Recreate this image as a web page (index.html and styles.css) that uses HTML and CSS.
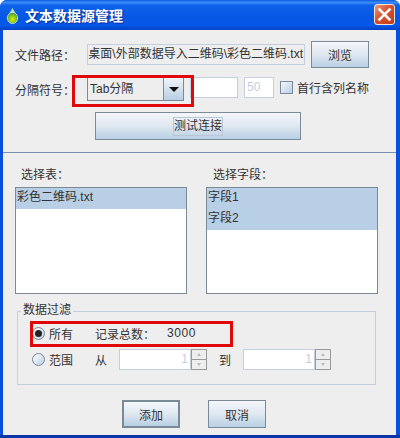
FILE: index.html
```html
<!DOCTYPE html>
<html lang="zh-CN">
<head>
  <meta charset="utf-8">
  <title>文本数据源管理</title>
  <link rel="stylesheet" href="styles.css">
</head>
<body>
  <div class="window">
    <!-- Title bar -->
    <div class="titlebar">
      <svg class="app-icon" width="16" height="20" viewBox="0 0 16 20">
        <defs>
          <radialGradient id="bulb" cx="50%" cy="62%" r="55%">
            <stop offset="0" stop-color="#d4ec00"/>
            <stop offset="0.65" stop-color="#86c41a"/>
            <stop offset="1" stop-color="#4a9a48"/>
          </radialGradient>
        </defs>
        <path d="M7.5 2 C8.5 3.5 9 5 10.5 7 L4.5 7 C6 5 6.5 3.5 7.5 2 Z" fill="#b7e0c0"/>
        <ellipse cx="7.5" cy="12" rx="5.2" ry="5.6" fill="url(#bulb)" stroke="#cfe6ec" stroke-width="0.8"/>
      </svg>
      <span class="title">文本数据源管理</span>
      <div class="close-btn">
        <svg width="15" height="15" viewBox="0 0 15 15">
          <path d="M2.5 2.5 L12.5 12.5 M12.5 2.5 L2.5 12.5" stroke="#fff" stroke-width="2.6" stroke-linecap="square"/>
        </svg>
      </div>
    </div>

    <div class="client">
      <!-- Source settings -->
      <div class="source">
        <div class="row row-path">
          <label class="field-label">文件路径<span class="colon">：</span></label>
          <div class="textfield path-field"><span>桌面\外部数据导入二维码\彩色二维码.txt</span></div>
          <button class="btn browse-btn">浏览</button>
        </div>
        <div class="row row-sep">
          <label class="field-label">分隔符号<span class="colon">：</span></label>
          <div class="combo">
            <span class="combo-text">Tab分隔</span>
            <span class="combo-arrow"><i></i></span>
          </div>
          <div class="textfield sep-field"></div>
          <div class="textfield num-field">50</div>
          <span class="checkbox"></span>
          <span class="check-label">首行含列名称</span>
        </div>
        <div class="row-test">
          <button class="btn test-btn"><span class="focus-box">测试连接</span></button>
        </div>
      </div>

      <!-- Table and field lists -->
      <div class="lists">
        <div class="list-col">
          <div class="list-title title-left">选择表<span class="colon">：</span></div>
          <ul class="listbox">
            <li class="selected">彩色二维码.txt</li>
          </ul>
        </div>
        <div class="list-col">
          <div class="list-title title-right">选择字段<span class="colon">：</span></div>
          <ul class="listbox">
            <li class="selected">字段1</li>
            <li class="selected">字段2</li>
          </ul>
        </div>
      </div>

      <!-- Filter -->
      <fieldset class="filter">
        <legend>数据过滤</legend>
        <div class="filter-row row-all">
          <span class="radio checked"></span>
          <span class="radio-label">所有</span>
          <span class="count-label">记录总数<span class="colon">：</span></span>
          <span class="count-value">3000</span>
        </div>
        <div class="filter-row row-range">
          <span class="radio"></span>
          <span class="radio-label">范围</span>
          <span class="from-label">从</span>
          <div class="spinner">
            <div class="spinner-value">1</div>
            <div class="spinner-btns"><i class="up"></i><i class="down"></i></div>
          </div>
          <span class="to-label">到</span>
          <div class="spinner">
            <div class="spinner-value">1</div>
            <div class="spinner-btns"><i class="up"></i><i class="down"></i></div>
          </div>
        </div>
      </fieldset>

      <div class="actions">
        <button class="btn action-btn default-btn">添加</button>
        <button class="btn action-btn">取消</button>
      </div>

      <!-- Red annotation boxes -->
      <div class="mark mark-combo"></div>
      <div class="mark mark-count"></div>
    </div>
  </div>
</body>
</html>
```
FILE: styles.css
```css
* {
  margin: 0;
  padding: 0;
  box-sizing: border-box;
}

body {
  width: 400px;
  height: 438px;
  overflow: hidden;
  background: #fff;
  font-family: "Liberation Sans", "Noto Sans CJK SC", sans-serif;
  font-size: 12px;
  color: #333;
}

.colon {
  font-family: "Noto Sans CJK TC", sans-serif;
}

.window {
  height: 438px;
  display: flex;
  flex-direction: column;
  background: #0a4fdc;
  border-radius: 7px 7px 0 0;
  border-bottom: 3px solid #0a34a8;
}

.titlebar {
  height: 30px;
  flex: none;
  display: flex;
  align-items: center;
  padding: 0 5px 0 5px;
  border-radius: 7px 7px 0 0;
  background: linear-gradient(#0a5ae0 0, #3b8cf6 8%, #0c62ea 18%, #0556e4 60%, #0658ea 85%, #0340c4 100%);
}

.app-icon {
  flex: none;
  margin-top: 1px;
}

.title {
  margin-left: 4px;
  font-size: 14px;
  font-weight: 700;
  color: #fff;
  text-shadow: 1px 1px 1px #0a2f9a;
}

.close-btn {
  margin-left: auto;
  margin-top: -1px;
  width: 21px;
  height: 21px;
  display: flex;
  align-items: center;
  justify-content: center;
  border: 1px solid #f4e4dc;
  border-radius: 3px;
  background: linear-gradient(135deg, #e89a80, #d9512c 45%, #c23a18);
}

.client {
  position: relative;
  flex: 1;
  margin: 0 4px 0 3px;
  background: #eeeeee;
}

.source {
  height: 123px;
  padding: 11px 0 0 12px;
  border-bottom: 1px solid #7a8fb0;
}

.row {
  display: flex;
  align-items: center;
}

.row-path {
  height: 27px;
}

.row-sep {
  height: 24px;
  margin-top: 9px;
}

.field-label {
  width: 72px;
  flex: none;
}

.textfield {
  height: 21px;
  flex: none;
  border: 1px solid #c3cfdf;
  background: #fff;
  line-height: 19px;
}

.path-field {
  width: 218px;
  display: flex;
  justify-content: flex-end;
  white-space: nowrap;
  padding-right: 1px;
  background: #eeeeee;
}

.path-field span {
  flex: none;
}

.btn {
  font-family: inherit;
  font-size: 12px;
  color: #333;
  border: 1px solid #7a8a99;
  background: linear-gradient(#f4f7fb, #dfe7f0 50%, #b8cfe5);
}

.browse-btn {
  width: 58px;
  height: 27px;
  margin-left: 6px;
}

.combo {
  width: 97px;
  height: 24px;
  flex: none;
  display: flex;
  border: 1px solid #7a8a99;
  background: #eeeeee;
}

.combo-text {
  flex: 1;
  line-height: 22px;
  padding-left: 2px;
}

.combo-arrow {
  width: 20px;
  display: flex;
  align-items: center;
  justify-content: center;
  border-left: 1px solid #7a8a99;
  background: linear-gradient(#f0f4f8, #b8cfe5);
}

.combo-arrow i {
  border-style: solid;
  border-width: 5px 5px 0;
  border-color: #111 transparent transparent;
}

.sep-field {
  width: 48px;
  margin-left: 6px;
  margin-top: -3px;
}

.num-field {
  width: 30px;
  margin-left: 6px;
  margin-top: -3px;
  padding-left: 2px;
  color: #c3cfdf;
}

.checkbox {
  width: 13px;
  height: 13px;
  flex: none;
  margin-left: 6px;
  margin-top: -3px;
  border: 1px solid #7a8a99;
  background: linear-gradient(135deg, #f4f7fb, #b8cfe5);
}

.check-label {
  margin-left: 4px;
  margin-top: -3px;
  white-space: nowrap;
}

.row-test {
  margin-top: 11px;
  padding-left: 80px;
}

.test-btn {
  width: 206px;
  height: 28px;
  display: flex;
  align-items: center;
  justify-content: center;
}

.focus-box {
  width: 50px;
  height: 19px;
  line-height: 17px;
  white-space: nowrap;
  border: 1px solid #b9c6d4;
}

.lists {
  display: flex;
  gap: 19px;
  padding: 11px 0 0 12px;
}

.list-col {
  width: 172px;
}

.list-title {
  height: 23px;
  line-height: 19px;
}

.title-left {
  padding-left: 6px;
}

.title-right {
  padding-left: 7px;
}

.listbox {
  height: 107px;
  list-style: none;
  border: 1px solid #7a8a99;
  background: #fff;
}

.listbox li {
  height: 21px;
  line-height: 19px;
  padding-left: 1px;
  white-space: nowrap;
}

.listbox li.selected {
  background: #b8cfe5;
}

.filter {
  width: 359px;
  height: 82px;
  margin: 9px 0 0 14px;
  border: 1px solid #c3cfdf;
}

.filter legend {
  margin-left: 3px;
  padding: 0 2px;
  height: 16px;
  line-height: 14px;
}

.filter-row {
  display: flex;
  align-items: center;
  padding-left: 14px;
}

.row-all {
  height: 22px;
  margin-top: 3px;
}

.row-range {
  height: 21px;
  margin-top: 5px;
}

.radio {
  width: 13px;
  height: 13px;
  flex: none;
  display: flex;
  align-items: center;
  justify-content: center;
  border: 1px solid #7a8a99;
  border-radius: 50%;
  background: linear-gradient(135deg, #fff, #b8cfe5);
}

.radio.checked::after {
  content: "";
  width: 7px;
  height: 7px;
  border-radius: 50%;
  background: #222;
}

.radio-label {
  margin-left: 4px;
  width: 24px;
}

.count-label {
  margin-left: 22px;
  width: 72px;
}

.count-value {
  letter-spacing: 0.6px;
}

.from-label {
  margin-left: 22px;
  width: 12px;
}

.to-label {
  margin-left: 12px;
  width: 12px;
}

.spinner {
  width: 88px;
  height: 21px;
  margin-left: 12px;
  flex: none;
  display: flex;
}

.spinner-value {
  flex: 1;
  border: 1px solid #c3cfdf;
  background: #fff;
  color: #c3cfdf;
  text-align: right;
  line-height: 19px;
  padding-right: 2px;
}

.spinner-btns {
  width: 16px;
  display: flex;
  flex-direction: column;
  border: 1px solid #9a9a9a;
  background: #eeeeee;
}

.spinner-btns i {
  flex: 1;
  display: flex;
  align-items: center;
  justify-content: center;
}

.spinner-btns .up {
  border-bottom: 1px solid #9a9a9a;
}

.spinner-btns i::after {
  content: "";
  border-style: solid;
  border-color: transparent;
}

.spinner-btns .up::after {
  border-width: 0 2px 3px;
  border-bottom-color: #bbb;
}

.spinner-btns .down::after {
  border-width: 3px 2px 0;
  border-top-color: #bbb;
}

.actions {
  display: flex;
  gap: 28px;
  margin-top: 15px;
  padding-left: 119px;
}

.action-btn {
  width: 58px;
  height: 28px;
}

.default-btn {
  border: 2px solid #7a8a99;
}

.mark {
  position: absolute;
  border: 3px solid #e00808;
}

.mark-combo {
  left: 69px;
  top: 45px;
  width: 122px;
  height: 32px;
}

.mark-count {
  left: 27px;
  top: 291px;
  width: 203px;
  height: 26px;
}
```
